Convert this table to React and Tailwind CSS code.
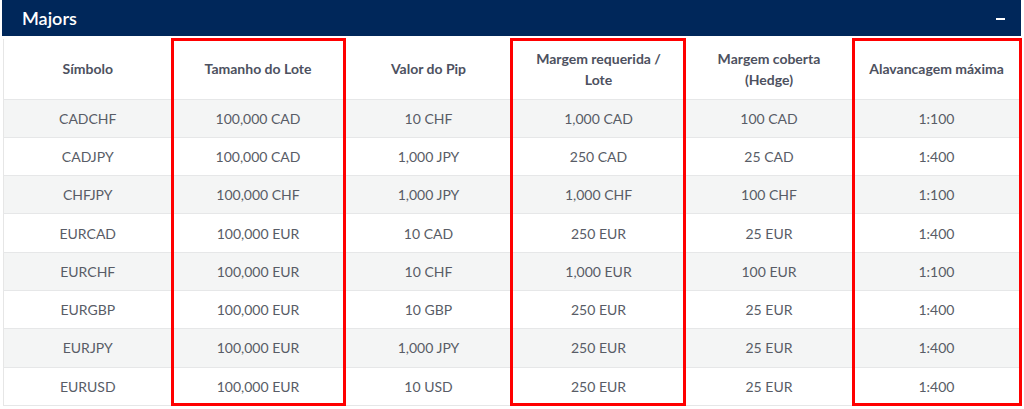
const headers = [
  ["Símbolo"],
  ["Tamanho do Lote"],
  ["Valor do Pip"],
  ["Margem requerida /", "Lote"],
  ["Margem coberta", "(Hedge)"],
  ["Alavancagem máxima"],
];

const rows = [
  ["CADCHF", "100,000 CAD", "10 CHF", "1,000 CAD", "100 CAD", "1:100"],
  ["CADJPY", "100,000 CAD", "1,000 JPY", "250 CAD", "25 CAD", "1:400"],
  ["CHFJPY", "100,000 CHF", "1,000 JPY", "1,000 CHF", "100 CHF", "1:100"],
  ["EURCAD", "100,000 EUR", "10 CAD", "250 EUR", "25 EUR", "1:400"],
  ["EURCHF", "100,000 EUR", "10 CHF", "1,000 EUR", "100 EUR", "1:100"],
  ["EURGBP", "100,000 EUR", "10 GBP", "250 EUR", "25 EUR", "1:400"],
  ["EURJPY", "100,000 EUR", "1,000 JPY", "250 EUR", "25 EUR", "1:400"],
  ["EURUSD", "100,000 EUR", "10 USD", "250 EUR", "25 EUR", "1:400"],
];

const widths = ["w-[168px]", "w-[173px]", "w-[168px]", "w-[172px]", "w-[169px]", "w-[166px]"];

export default function App() {
  return (
    <div className="w-[1024px] h-[409px] bg-white overflow-hidden font-['Lato','Liberation_Sans',sans-serif]">
      <div className="ml-[2px] w-[1019px] h-[36px] bg-[#00275a] flex items-center justify-between pl-[20px] pr-[16px]">
        <span className="text-white text-[18px] font-semibold">Majors</span>
        <span className="block w-[9px] h-[2px] bg-white mt-[1px]"></span>
      </div>

      <div className="relative mt-[3px]">
        <table className="ml-[3px] w-[1016px] border-collapse table-fixed border-l border-[#e6e6e6] text-[14px]">
          <colgroup>
            {widths.map((w, i) => (
              <col key={i} className={w} />
            ))}
          </colgroup>
          <thead>
            <tr className="h-[60px] border-b border-[#e6e7e8] bg-white">
              {headers.map((h) => (
                <th key={h[0]} className="px-1 font-bold text-[#4d5160] leading-[21px] text-center whitespace-nowrap">
                  {h.map((line, k) => (
                    <span key={k} className="block">
                      {line}
                    </span>
                  ))}
                </th>
              ))}
            </tr>
          </thead>
          <tbody>
            {rows.map((r, i) => (
              <tr
                key={r[0]}
                className={`h-[38.3px] border-b border-[#e6e7e8] ${i % 2 === 0 ? "bg-[#f4f5f5]" : "bg-white"}`}
              >
                {r.map((c, j) => (
                  <td key={j} className="text-center text-[#585c66]">
                    {c}
                  </td>
                ))}
              </tr>
            ))}
          </tbody>
        </table>

        <div className="absolute left-[171px] top-[-1px] w-[175px] h-[368px] border-[3px] border-[#ff0000] pointer-events-none"></div>
        <div className="absolute left-[510px] top-[-1px] w-[176px] h-[368px] border-[3px] border-[#ff0000] pointer-events-none"></div>
        <div className="absolute left-[852px] top-[-1px] w-[170px] h-[368px] border-[3px] border-[#ff0000] pointer-events-none"></div>
      </div>
    </div>
  );
}
